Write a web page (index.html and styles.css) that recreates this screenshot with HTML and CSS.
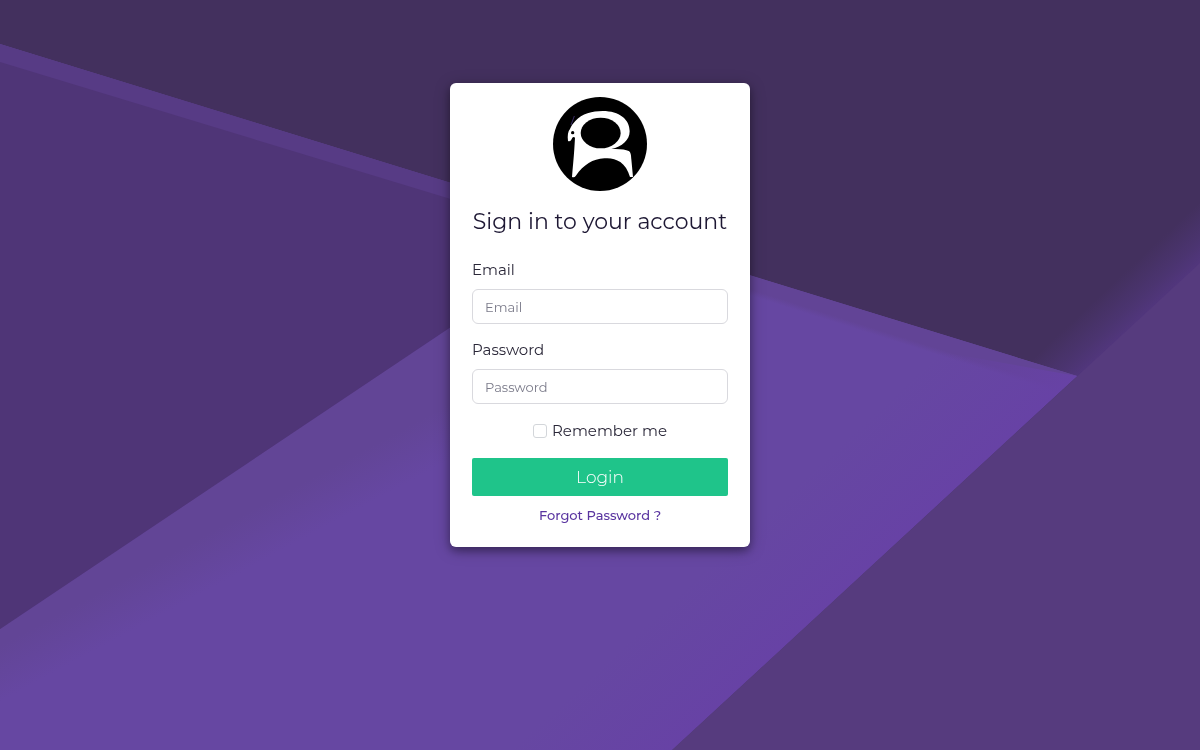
FILE: index.html
```html
<!DOCTYPE html>
<html lang="en">
<head>
  <meta charset="utf-8">
  <meta name="viewport" content="width=device-width, initial-scale=1">
  <title>Sign in</title>
  <link rel="stylesheet" href="styles.css">
</head>
<body>
  <svg class="backdrop" viewBox="0 0 1200 750" preserveAspectRatio="xMidYMid slice" aria-hidden="true">
    <defs>
      <linearGradient id="edge" gradientUnits="userSpaceOnUse" x1="1138" y1="320" x2="1108" y2="288">
        <stop offset="0" stop-color="#51367c"/>
        <stop offset="0.35" stop-color="#4b3470"/>
        <stop offset="1" stop-color="#43305e"/>
      </linearGradient>
      <linearGradient id="fold" gradientUnits="userSpaceOnUse" x1="225" y1="478" x2="268" y2="558">
        <stop offset="0" stop-color="#624596"/>
        <stop offset="0.45" stop-color="#624596"/>
        <stop offset="1" stop-color="#6647a2"/>
      </linearGradient>
      <linearGradient id="glow" gradientUnits="userSpaceOnUse" x1="875" y1="563" x2="800" y2="482">
        <stop offset="0" stop-color="#6742a5"/>
        <stop offset="1" stop-color="#6742a5" stop-opacity="0"/>
      </linearGradient>
      <linearGradient id="rim" gradientUnits="userSpaceOnUse" x1="900" y1="322" x2="894" y2="341">
        <stop offset="0" stop-color="#624496"/>
        <stop offset="0.7" stop-color="#624496"/>
        <stop offset="1" stop-color="#6647a2"/>
      </linearGradient>
    </defs>
    <rect width="1200" height="750" fill="url(#edge)"/>
    <path d="M0 44 1077 376 672 750H0Z" fill="url(#fold)"/>
    <path d="M450 183 1077 376 1056 395 450 207Z" fill="url(#rim)"/>
    <path d="M1077 376 672 750H440L930 350Z" fill="url(#glow)"/>
    <path d="M0 44 500 198V294L0 629Z" fill="#573b85"/>
    <path d="M0 62 500 214V294L0 629Z" fill="#4f3577"/>
    <path d="M1200 263 672 750H1200Z" fill="#563b7e"/>
  </svg>
  <main class="page">
    <section class="card">
      <svg class="logo" viewBox="39 36 282 282" role="img" aria-label="Company logo">
        <circle cx="180" cy="177" r="141" fill="#000"/>
        <path d="M93 120 103 93" stroke="#3b2c66" stroke-width="3"/>
        <path d="M84 168C82 152 84 139 90 132C94 124 97 117 106 108C126 86 157 78 188 78C238 78 269 103 269 139C269 165 246 186 214 192C240 191 257 193 266 198C273 202 273 211 274 223L279 276H270C264 255 254 240 241 231C227 222 211 218 193 220C158 222 132 238 107 273Q103 279 96 276C98 249 101 222 103 191L105 158Q101 154 97 158C94 165 91 171 84 168Z" fill="#fff"/>
        <ellipse cx="182" cy="144" rx="60" ry="46" fill="#000"/>
        <path d="M117 120Q105 140 121 157" fill="none" stroke="#fff" stroke-width="5"/>
        <circle cx="98" cy="143" r="5" fill="#000"/>
      </svg>
      <h1 class="title">Sign in to your account</h1>
      <form class="form">
        <label class="label" for="email">Email</label>
        <input class="field" id="email" type="email" placeholder="Email">
        <label class="label" for="password">Password</label>
        <input class="field" id="password" type="password" placeholder="Password">
        <div class="remember">
          <input class="check" id="remember" type="checkbox">
          <label for="remember">Remember me</label>
        </div>
        <button class="login" type="submit">Login</button>
      </form>
      <a class="forgot" href="#">Forgot Password ?</a>
    </section>
  </main>
</body>
</html>
```
FILE: styles.css
```css
* { box-sizing: border-box; }

body {
  margin: 0;
  background: #43305e;
  color: #2a2738;
  font-family: Montserrat, Inter, sans-serif;
  font-size: 15px;
}

.backdrop {
  position: fixed;
  inset: 0;
  width: 100%;
  height: 100%;
  z-index: -1;
}

.page {
  display: flex;
  justify-content: center;
  padding: 83px 16px 32px;
}

.card {
  display: flex;
  flex-direction: column;
  align-items: center;
  width: 100%;
  max-width: 300px;
  padding: 14px 0 22px;
  background: #fff;
  border-radius: 6px;
  box-shadow: 0 4px 8px rgba(0, 0, 0, 0.3), 0 3px 16px rgba(0, 0, 0, 0.25);
}

.logo { width: 94px; height: 94px; }

.title {
  margin: 15px 0 20px;
  color: #1d1733;
  font-size: 22px;
  font-weight: 400;
  line-height: 32px;
  white-space: nowrap;
}

.form {
  display: flex;
  flex-direction: column;
  align-self: stretch;
  padding: 0 22px;
}

.label { line-height: 24px; }

.field {
  width: 100%;
  height: 35px;
  margin: 7px 0 14px;
  padding: 0 12px;
  border: 1px solid #d9d9de;
  border-radius: 6px;
  background: #fff;
  color: #2a2738;
  font: inherit;
  font-size: 13px;
}

.field::placeholder { color: #7b7b8a; opacity: 1; }

.remember {
  display: flex;
  align-items: center;
  justify-content: center;
  gap: 5px;
  line-height: 26px;
}

.check {
  appearance: none;
  width: 14px;
  height: 14px;
  margin: 0;
  border: 1px solid #d3d6da;
  border-radius: 3px;
  background: #fff;
}

.check:checked { background: #1fc48a; }

.login {
  height: 38px;
  margin-top: 14px;
  border: 0;
  border-radius: 2px;
  background: #1fc48a;
  color: #fff;
  font: inherit;
  font-size: 17px;
  font-weight: 300;
}

.forgot {
  margin-top: 9px;
  color: #5a35a0;
  font-size: 13px;
  font-weight: 500;
  line-height: 20px;
  text-decoration: none;
}
```
